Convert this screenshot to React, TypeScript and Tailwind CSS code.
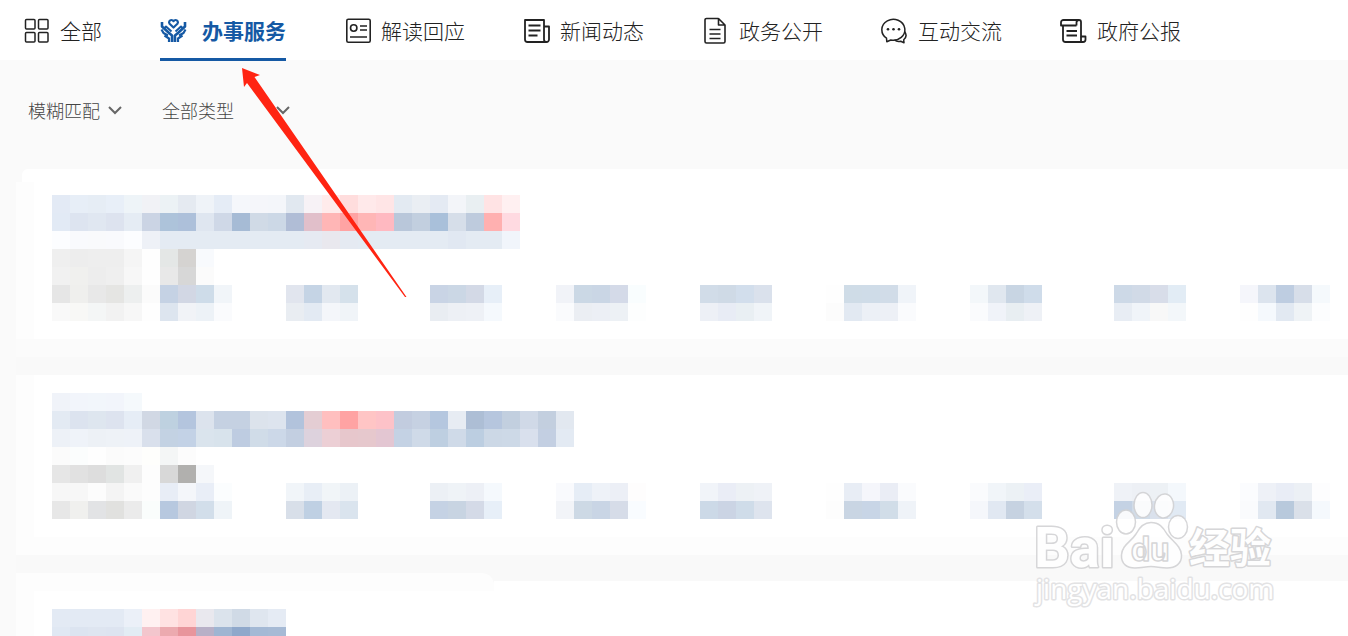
import type { ReactNode } from "react";

type Segment = {
  skip: number;
  colors: string;
};

type NavItem = {
  label: string;
  icon: ReactNode;
  active?: boolean;
};

const BLOCK = 18;

const iconProps = {
  width: 28,
  height: 28,
  viewBox: "0 0 28 28",
  fill: "none",
  stroke: "currentColor",
  strokeWidth: 1.6,
  strokeLinejoin: "round" as const,
};

const navItems: NavItem[] = [
  {
    label: "全部",
    icon: (
      <svg {...iconProps} strokeWidth={1.5}>
        <rect x="2.500" y="2.500" width="9.500" height="9.500" rx="1" />
        <rect x="15.500" y="2.500" width="9.500" height="9.500" rx="1" />
        <rect x="2.500" y="15.500" width="9.500" height="9.500" rx="1" />
        <rect x="15.500" y="15.500" width="9.500" height="9.500" rx="1" />
      </svg>
    ),
  },
  {
    label: "办事服务",
    active: true,
    icon: (
      <svg {...iconProps} strokeWidth={2.2}>
        <path d="M13.5 10.5 9.6 6.8C8.3 5 9.6 3 11.4 3c1 0 1.7.5 2.1 1.2.4-.7 1.1-1.2 2.1-1.2 1.8 0 3.1 2 1.8 3.8L13.5 10.5Z" />
        <path d="M2 5v4.500L8.500 15.500 12 18.500V25M25 5v4.500L18.500 15.500 15 18.500V25" strokeWidth={2.6} />
        <path d="M4.500 11 6 9.500 11.500 14.500M22.500 11 21 9.500 15.500 14.500" strokeWidth={2} />
        <path d="M1.500 12.500 3.500 16 8 18.500M25.500 12.500 23.500 16 19 18.500" />
        <path d="M4.500 18.500 9 21.500V25M22.500 18.500 18 21.500V25" />
      </svg>
    ),
  },
  {
    label: "解读回应",
    icon: (
      <svg {...iconProps}>
        <rect x="2.8" y="2.3" width="23.4" height="23" rx="1.5" />
        <circle cx="9.7" cy="11" r="3.2" />
        <path d="M16 9h7M16 13h7M6 20h17" />
      </svg>
    ),
  },
  {
    label: "新闻动态",
    icon: (
      <svg {...iconProps} strokeWidth={1.8}>
        <path d="M21 25H4.5A2.5 2.5 0 0 1 2 22.5V3h19v19.5a2.5 2.5 0 0 0 5 0V9.5h-5M21 25h3" />
        <path d="M5.5 8.5h12M5.5 13.5h12M5.5 18.5h9" />
      </svg>
    ),
  },
  {
    label: "政务公开",
    icon: (
      <svg {...iconProps}>
        <path d="M16 1.500H4.500A1.500 1.500 0 0 0 3 3v21.500A1.500 1.500 0 0 0 4.500 26h17a1.500 1.500 0 0 0 1.500-1.500V8L16.500 1.500V8H23" />
        <path d="M7.5 12.5h11M7.5 17h11M7.5 21.5h11" />
      </svg>
    ),
  },
  {
    label: "互动交流",
    icon: (
      <svg {...iconProps} strokeWidth={1.5}>
        <path d="M5.5 21.2A11.5 10.5 0 1 1 9.8 23L5.8 24.7Z" />
        <path d="M23.500 14.500c2.500 3.200 1.800 6-.8 8.200l.3 3-3.300-1.500c-2.500.7-4.500.2-6.200-1.300" />
        <g fill="currentColor" stroke="none">
          <circle cx="7" cy="12.3" r="1.3" />
          <circle cx="12.5" cy="12.3" r="1.3" />
          <circle cx="18" cy="12.3" r="1.3" />
        </g>
      </svg>
    ),
  },
  {
    label: "政府公报",
    icon: (
      <svg {...iconProps} strokeWidth={1.8}>
        <path d="M16.5 8.5H1v-3A2.5 2.5 0 0 1 3.5 3H19a2 2 0 0 1 2 2v14.5h4.5v3a2.5 2.5 0 0 1-2.500 2.500H5.500A2.500 2.500 0 0 1 3 22.500v-14" />
        <path d="M16.5 8.5v-3A2.500 2.500 0 0 1 19 3M21 19.500V25M6.500 14h10.500M6.500 18.500h10.500" />
      </svg>
    ),
  },
];

const firstCard: Segment[][] = [
  [{ skip: 0, colors: "e3eaf5 e7eef7 e6edf5 e8eff8 eef4f8 f1f2f6 ecf2f5 e5eaf1 eff3f8 e5ecf6 f5f7fb f5f6fa f4f6fa e1e8f0 f7f2f6 ffebeb ffdddd ffe9ea ffe5e6 e3eaf2 eaeef3 e4eaf3 f3f5f9 e9eff2 ffe3e4 fff0f1" }],
  [{ skip: 0, colors: "e2eaf5 dde4f0 e0e7f1 dde3ef e5ecf4 cbd4e4 adc3da adc0da dfe6f0 cfd8e7 a6bbd5 d0dae6 ccd8e6 b0bdd6 e1bfca ffb6b6 ffa3a3 ffb6b6 ffb9c1 b9c7da c2cfdf a9c0da d6dee9 becbdd ffb0b0 ffdae1" }],
  [{ skip: 0, colors: "fcfdff f9fafd f9fafc f9fafd fcfdff eef1f7 e4ebf3 e4ebf3 e4ebf3 e4ebf3 e4ebf3 e4ebf3 e4ebf3 e4ebf3 e6eaf2 e9e8ee e5eaf2 e4ebf3 e4ebf3 e4ebf3 e4ebf3 e4ebf3 e1e8f2 e4ebf3 e4ebf3 f1f5fb" }],
  [{ skip: 0, colors: "efefef ededed eeeeee eeeeee f5f5f5 fefefe e4e7e6 d5d3d1 f8fafd" }],
  [{ skip: 0, colors: "f1f1f1 f0f0ee ededed efefef f7f7f7 fefefe e8e8e8 d7d7d7 fbfbfb" }],
  [
    { skip: 0, colors: "e6e6e6 efefed e8e8e8 e5e5e3 edefef fbfbfb c5d2e4 d2d7e4 cedce9 f1f5f9" },
    { skip: 3, colors: "e1e5ee c5d4e5 e2e8f0 d5e1eb" },
    { skip: 4, colors: "c9d4e5 cbd7e5 d3d9e6 e7eff8" },
    { skip: 3, colors: "f1f3f8 cbd8e5 cad6e5 d4dae8 f9fdfe" },
    { skip: 3, colors: "d1dce8 cfdae6 d2deec dae1ec" },
    { skip: 3, colors: "fefefe cfdce7 cfdce8 d1dce8 f0f4f9" },
    { skip: 3, colors: "f3f7fa e0e7ef c8d5e3 cfdcea" },
    { skip: 4, colors: "cdd9e7 d1dae7 d8dde9 e2ecf5" },
    { skip: 3, colors: "f5f6fb dce4ee becde1 d7dee9 f5f9fc" },
  ],
  [
    { skip: 0, colors: "f9f9f9 f8f8f6 f4f6f6 f2f2f2 f7f7f7 fefefe dde5ef f1f3f7 edf2f7 fafbfd" },
    { skip: 3, colors: "e9edf2 e3eaf3 f4f6fa f0f4f8" },
    { skip: 4, colors: "e9edf2 edf0f5 eef1f6 f5f9fd" },
    { skip: 3, colors: "fafbfd ebeef3 eceff5 edf1f5 fdfefe" },
    { skip: 3, colors: "edf0f6 e8ecf5 e9eff3 f0f4f8" },
    { skip: 3, colors: "fcfcfc e2e9f2 ecf0f6 edf0f6 fafbfd" },
    { skip: 3, colors: "fafbfd f0f3f9 e8eef2 eef1f6" },
    { skip: 4, colors: "e8edf4 f0f4f9 f8f8f8 f3f7fa" },
    { skip: 3, colors: "fefefe f5f9fd e2e9f2 eff3f6 fcfdfe" },
  ],
];

const secondCard: Segment[][] = [
  [{ skip: 0, colors: "f0f3f9 f2f5fb f2f6fb f2f5fb f5f9fc" }],
  [{ skip: 0, colors: "e3eaf3 dce3ef dee6ef dde3ef e6edf6 d1d8e4 bed1e0 b4c5de dce3ed c5d1e2 c5d1e2 dce3ec dde4ee b2c3dc e4cdd3 ffbfbf ffa3a3 ffc5c5 fdc2c8 c2ccdf c6d1e2 b5c7df e7ecf3 adbed5 b6c6de c2cfdf d0d9e7 c3cfdf e2e8f0" }],
  [{ skip: 0, colors: "edf1f7 eff3f9 edf1f6 eef2f7 eef2f8 d9e0ec c3d2e3 c3d2e6 dae4ed d8e3ec becce1 d0dce8 ccd8e8 c3cfe1 ddd2dd eccfd5 e7c7cc e6c8cd e3c6d2 c4d2e4 cfdae8 becfe1 cfdae8 bccee1 ccd8e6 cdd9e7 d9e0ed c3cfe2 e3eaf3" }],
  [{ skip: 0, colors: "fbfbfb fbfdfd fefefe fbfbfb fcfcfc fefefc f4f6f6 fcfcfc" }],
  [{ skip: 0, colors: "e6e6e6 e1e1e1 dddddd e1e4e3 f0f0f0 fdfdfd d8d8d8 b1b0ae f5f7fa" }],
  [
    { skip: 0, colors: "f7f7f7 f7f7f7 fcfcfc f4f4f4 fafafa fdfdfd e8edf6 f4f6fa e9eef7 fbfdfe" },
    { skip: 3, colors: "f1f5f9 e8eef6 f1f5f8 ecf1f6" },
    { skip: 4, colors: "ecf0f5 eff3f7 edf0f6 f5f9fd" },
    { skip: 3, colors: "f9fafd e6edf6 eef2f8 eceff6 fefdfd" },
    { skip: 3, colors: "f1f4f9 eaedf6 edf1f5 eff2f7" },
    { skip: 3, colors: "fefefe e8edf5 f5f6fb eaedf5 fafbfd" },
    { skip: 3, colors: "fafbfd f1f5f9 ecf1f5 eaeef7" },
    { skip: 4, colors: "eff2f7 edf0f5 edf1f5 f4f8fc" },
    { skip: 3, colors: "fbfcfe eef1f7 e9edf6 ecf0f5 fdfdfe" },
  ],
  [
    { skip: 0, colors: "e7e7e7 f0f0ee e2e3e5 e1e1df ebebeb fafdfc b7c8df d0d6e2 d2deea eff4f8" },
    { skip: 3, colors: "d8dfe9 bfd0e3 e4e8f1 dae4ee" },
    { skip: 4, colors: "c5d2e4 c8d4e2 d4dae7 e7eff8" },
    { skip: 3, colors: "f2f4f8 cdd9e5 c9d5e5 d6dce8 f9fcff" },
    { skip: 3, colors: "ccd9e7 cbd4e4 cfdce9 dee4ee" },
    { skip: 3, colors: "fdfdfd c9d5e3 c8d5e6 d1dde8 eff3f8" },
    { skip: 3, colors: "f5f7fb e1e8f2 c6d2e1 d4dfeb" },
    { skip: 4, colors: "c4d2e4 d1dce8 dae1ec e1eaf4" },
    { skip: 3, colors: "fafbfd e1e8f1 b8c9dc dae0e9 f5f9fd" },
  ],
];

const thirdCard: Segment[][] = [
  [{ skip: 0, colors: "e3eaf4 e3eaf4 e3eaf4 e3eaf4 ebf0f8 fff1f1 ffe2e2 ffd5d5 e9e8ee dbe3ec d0dae6 dfe6ef e5ebf4" }],
  [{ skip: 0, colors: "e0e8f3 dce4f0 dee5f0 dde4f0 e2ecf4 f3c6cd ecaaaf e8959c b8b0c7 9fb5d2 8fa8cb a4b9d5 a6bad5" }],
];

function Mosaic({ rows }: { rows: Segment[][] }) {
  return (
    <div aria-hidden="true">
      {rows.map((row, r) => (
        <div key={r} className="flex h-[18px]">
          {row.map((segment, s) => (
            <div key={s} className="flex shrink-0" style={{ marginLeft: segment.skip * BLOCK }}>
              {segment.colors.split(" ").map((color, c) => (
                <span key={c} className="w-[18px] shrink-0" style={{ backgroundColor: `#${color}` }} />
              ))}
            </div>
          ))}
        </div>
      ))}
    </div>
  );
}

function Filter({ id, label, options, width }: { id: string; label: string; options: string[]; width: string }) {
  return (
    <div className={`relative flex items-center text-[#444] ${width}`}>
      <label htmlFor={id} className="sr-only">
        {label}
      </label>
      <select id={id} className="h-9 w-full appearance-none bg-transparent text-[18px] leading-9 font-light outline-none">
        {options.map((option) => (
          <option key={option}>{option}</option>
        ))}
      </select>
      <svg className="pointer-events-none absolute right-0 text-[#666]" width="14" height="10" viewBox="0 0 14 10" fill="none" stroke="currentColor" strokeWidth="2">
        <path d="M1 2 7 8 13 2" />
      </svg>
    </div>
  );
}

function Watermark() {
  return (
    <svg
      className="pointer-events-none absolute right-[68px] bottom-6 opacity-90"
      width="250"
      height="124"
      viewBox="0 0 250 124"
      fill="#fff"
      stroke="#d2d2d4"
      strokeLinejoin="round"
    >
      <g strokeWidth="3" style={{ paintOrder: "stroke" }}>
        <text x="4" y="79" fontSize="56" fontWeight="700" fontFamily="Roboto, sans-serif">
          Bai
        </text>
        <text x="159" y="75" fontSize="41" fontWeight="700" fontFamily="'Noto Sans CJK SC', sans-serif">
          经验
        </text>
        <text x="6" y="111" fontSize="28" stroke="#e0e0e2" fontFamily="'Open Sans', 'Noto Sans', sans-serif">
          jingyan.baidu.com
        </text>
      </g>
      <g strokeWidth="1.5">
        <ellipse cx="96" cy="34" rx="9.5" ry="12" />
        <ellipse cx="113" cy="17" rx="9" ry="12.5" />
        <ellipse cx="134" cy="18" rx="9.5" ry="12" transform="rotate(8 134 18)" />
        <ellipse cx="148" cy="39" rx="9.5" ry="11.5" />
        <path d="M121 34.5C113 34.5 109 40 106 46 101 54 92 57 91.500 67 91 76 97 80 105 80c7 0 10-1.500 16-1.500s9 1.500 16 1.500c8 0 15-4 14.500-13-.5-9-8.500-13-14.500-21C133 39 129 34.500 121 34.500Z" />
      </g>
      <text x="101" y="73" fontSize="34" fontWeight="700" strokeWidth="1.5" fontFamily="Roboto, sans-serif">
        du
      </text>
    </svg>
  );
}

export default function App() {
  return (
    <div className="relative h-screen overflow-hidden bg-[#fafafa] font-['Noto_Sans_CJK_SC',sans-serif] text-[#222]">
      {/* Category tabs */}
      <nav className="flex h-[61px] gap-[58px] bg-linear-to-b from-white from-[60px] to-transparent to-[60px] pl-[23px]">
        {navItems.map((item) => (
          <a
            key={item.label}
            href="#"
            aria-current={item.active ? "page" : undefined}
            className={`flex shrink-0 items-center border-b-3 pt-1 text-[21px] leading-[30px] whitespace-nowrap ${
              item.active ? "gap-3.5 border-[#1559a4] font-bold text-[#1559a4]" : "gap-[9px] border-transparent font-light"
            }`}
          >
            {item.icon}
            <span className="pb-0.5">{item.label}</span>
          </a>
        ))}
      </nav>

      {/* Filters */}
      <div className="flex gap-10 px-7 pt-[31px] pb-[41px]">
        <Filter id="match" label="匹配方式" options={["模糊匹配", "精确匹配"]} width="w-[94px]" />
        <Filter id="type" label="类型" options={["全部类型"]} width="w-[128px]" />
      </div>

      {/* Results */}
      <main>
        <article>
          <div className="ml-[22px] h-[13px] rounded-tl-md bg-white" />
          <div className="ml-4 border-l-18 border-[#fdfdfd] bg-white pt-[13px] pb-[18px] pl-[18px]">
            <Mosaic rows={firstCard} />
          </div>
        </article>
        <div className="ml-4 h-[18px] bg-[#fbfbfb]" />
        <div className="ml-4 h-[18px] bg-[#f9f9f9]" />

        <article className="ml-4 border-l-18 border-[#fdfdfd] bg-white pt-[18px] pl-[18px]">
          <Mosaic rows={secondCard} />
          <div className="mt-[18px] -ml-[18px] h-[18px] bg-[#fdfdfd]" />
        </article>
        <div className="ml-4 h-[18px] bg-[#f9f9f9]" />

        <article className="ml-4">
          <div className="flex h-[18px] bg-[#f9f9f9]">
            <div className="w-[478px] rounded-tr-xl bg-[#fdfdfd]" />
            <div className="mt-2 grow bg-white" />
          </div>
          <div className="border-l-18 border-[#fdfdfd] bg-white pt-[18px] pb-[18px] pl-[18px]">
            <Mosaic rows={thirdCard} />
          </div>
        </article>
      </main>

      <Watermark />

      {/* Arrow pointing at the active tab */}
      <svg className="pointer-events-none absolute top-[67px] left-[242px]" width="166" height="232" viewBox="0 0 166 232" fill="#ff2412">
        <path d="M0 1 18 8 12.5 10 164.5 230 163 230 5 16 2 20Z" />
      </svg>
    </div>
  );
}
